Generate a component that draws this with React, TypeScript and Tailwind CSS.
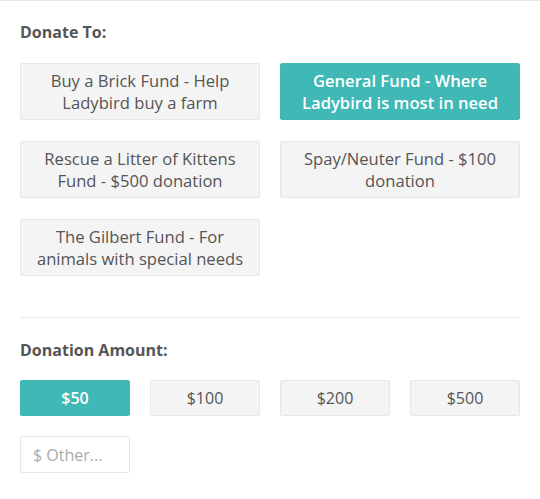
import { useState } from "react";

const funds = [
  "Buy a Brick Fund - Help Ladybird buy a farm",
  "General Fund - Where Ladybird is most in need",
  "Rescue a Litter of Kittens Fund - $500 donation",
  "Spay/Neuter Fund - $100 donation",
  "The Gilbert Fund - For animals with special needs",
];

const amounts = ["$50", "$100", "$200", "$500"];

export default function App() {
  const [fund, setFund] = useState(1);
  const [amount, setAmount] = useState(0);

  return (
    <div className="min-h-screen bg-white border-t border-[#e6e6e6] px-5 font-['Open_Sans',sans-serif] text-[#555]">
      <div className="pt-[21px]">
        <h3 className="text-[16px] leading-5 font-bold">Donate To:</h3>
        <div className="grid grid-cols-2 gap-x-5 gap-y-[21px] mt-[21px]">
          {funds.map((f, i) => (
            <button
              key={f}
              onClick={() => setFund(i)}
              className={
                "h-[57px] rounded-[2px] border px-3 text-[16.6px] leading-[22px] " +
                (fund === i
                  ? "bg-[#40b8b6] border-[#40b8b6] text-white font-semibold"
                  : "bg-[#f4f4f4] border-[#e6e6e6] text-[#555]")
              }
            >
              {f}
            </button>
          ))}
        </div>
      </div>

      <div className="border-t border-[#ebebeb] mt-[41px] pt-[22px]">
        <h3 className="text-[16px] leading-5 font-bold">Donation Amount:</h3>
        <div className="grid grid-cols-4 gap-5 mt-5">
          {amounts.map((a, i) => (
            <button
              key={a}
              onClick={() => setAmount(i)}
              className={
                "h-9 rounded-[2px] border text-[16px] " +
                (amount === i
                  ? "bg-[#40b8b6] border-[#40b8b6] text-white font-semibold"
                  : "bg-[#f4f4f4] border-[#e6e6e6] text-[#555]")
              }
            >
              {a}
            </button>
          ))}
          <input
            placeholder="$ Other..."
            className="h-[37px] rounded-[2px] border border-[#e6e6e6] px-3 text-[16px] text-[#555] placeholder:text-[#aaa] outline-none"
          />
        </div>
      </div>
    </div>
  );
}
